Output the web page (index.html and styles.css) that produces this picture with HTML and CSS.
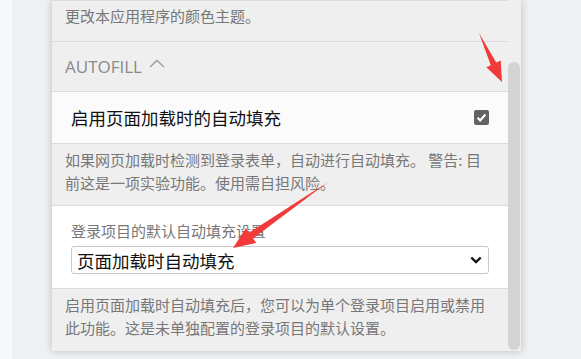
FILE: index.html
```html
<!DOCTYPE html>
<html lang="zh-CN">
<head>
    <meta charset="UTF-8">
    <title>Options</title>
    <link rel="stylesheet" href="styles.css">
</head>
<body>

<div class="edge"></div>

<div class="panel">
    <div class="content">
        <!-- end of the theme option -->
        <div class="note first">更改本应用程序的颜色主题。</div>

        <div class="section-head">
            AUTOFILL
            <svg class="caret" width="16" height="9" viewBox="0 0 16 9">
                <path d="M1 8 L8 1.5 L15 8" fill="none" stroke="#9a9a9a" stroke-width="1.3"/>
            </svg>
        </div>

        <div class="row toggle-row">
            <span class="row-title">启用页面加载时的自动填充</span>
            <span class="check">
                <svg width="15" height="15" viewBox="0 0 15 15">
                    <path d="M3.6 7.8 L6.2 10.4 L11.4 4.6" fill="none" stroke="#fff" stroke-width="2.2"/>
                </svg>
            </span>
        </div>
        <div class="note">如果网页加载时检测到登录表单，自动进行自动填充。 警告: 目前这是一项实验功能。使用需自担风险。</div>

        <div class="row select-row">
            <label class="row-label">登录项目的默认自动填充设置</label>
            <div class="select">
                <span>页面加载时自动填充</span>
                <svg width="12" height="8" viewBox="0 0 12 8">
                    <path d="M1.3 1.5 L6 6 L10.7 1.5" fill="none" stroke="#111" stroke-width="2.4"/>
                </svg>
            </div>
        </div>
        <div class="note">启用页面加载时自动填充后，您可以为单个登录项目启用或禁用此功能。这是未单独配置的登录项目的默认设置。</div>
    </div>

    <div class="scrollbar">
        <div class="thumb"></div>
    </div>
</div>

<!-- annotation arrows drawn over the screenshot -->
<svg class="arrows" width="581" height="359" viewBox="0 0 581 359">
    <polygon points="479,33 496.2,62.6 500.7,60.5 502,82 486.3,67.3 490.8,65.2" fill="#f23a3a"/>
    <polygon points="328,182 253.1,238.4 256.2,242.9 233,248 246,228.1 249.1,232.6" fill="#f23a3a"/>
</svg>

</body>
</html>
```

FILE: styles.css
```css
body {
    margin: 0;
    height: 359px;
    overflow: hidden;
    display: flex;
    align-items: flex-start;
    background-color: #eff0f4;
    font-family: "Noto Sans CJK SC", "Noto Sans", sans-serif;
}

.edge {
    width: 12px;
    height: 359px;
    background-color: #f7f8fa;
    margin-right: 40px;
}

.panel {
    width: 469px;
    height: 351px;
    display: flex;
    background-color: #efefef;
    box-shadow: 0 0 8px rgba(0, 0, 0, 0.22);
    overflow: hidden;
}

.content {
    flex: 1;
}

.note {
    border-top: 1px solid #dcdcdc;
    padding: 5px 13px 11px;
    font-size: 15px;
    line-height: 22.5px;
    color: #777;
}

.note.first {
    height: 24px;
    padding-top: 4px;
    padding-bottom: 12px;
}

.section-head {
    border-top: 1px solid #dcdcdc;
    height: 49px;
    padding: 0 13px;
    display: flex;
    align-items: center;
    font-family: "Open Sans", sans-serif;
    font-size: 17px;
    color: #8a8a8a;
}

.caret {
    margin-left: 7px;
    margin-top: -6px;
}

.row {
    border-top: 1px solid #dcdcdc;
    padding: 0 19px;
}

.toggle-row {
    height: 51px;
    display: flex;
    align-items: center;
    justify-content: space-between;
    background-color: #fbfbfb;
}

.row-title {
    font-size: 17.5px;
    color: #111;
}

.check {
    width: 15px;
    height: 15px;
    border-radius: 2px;
    background-color: #636363;
    display: flex;
}

.select-row {
    height: 82px;
    background-color: #fff;
    display: flex;
    flex-direction: column;
}

.row-label {
    margin-top: 14px;
    font-size: 15px;
    line-height: 22px;
    color: #777;
}

.select {
    margin-top: 4px;
    height: 26px;
    border: 1px solid #c8c8c8;
    border-radius: 3px;
    padding: 0 6px 0 5px;
    display: flex;
    align-items: center;
    justify-content: space-between;
    font-size: 17.5px;
    color: #111;
}

.scrollbar {
    width: 12px;
    padding-top: 62px;
    margin-right: 1px;
}

.thumb {
    height: 288px;
    border-radius: 6px;
    background-color: #d4d4d4;
}

.arrows {
    position: absolute;
    left: 0;
    top: 0;
    pointer-events: none;
}
```
